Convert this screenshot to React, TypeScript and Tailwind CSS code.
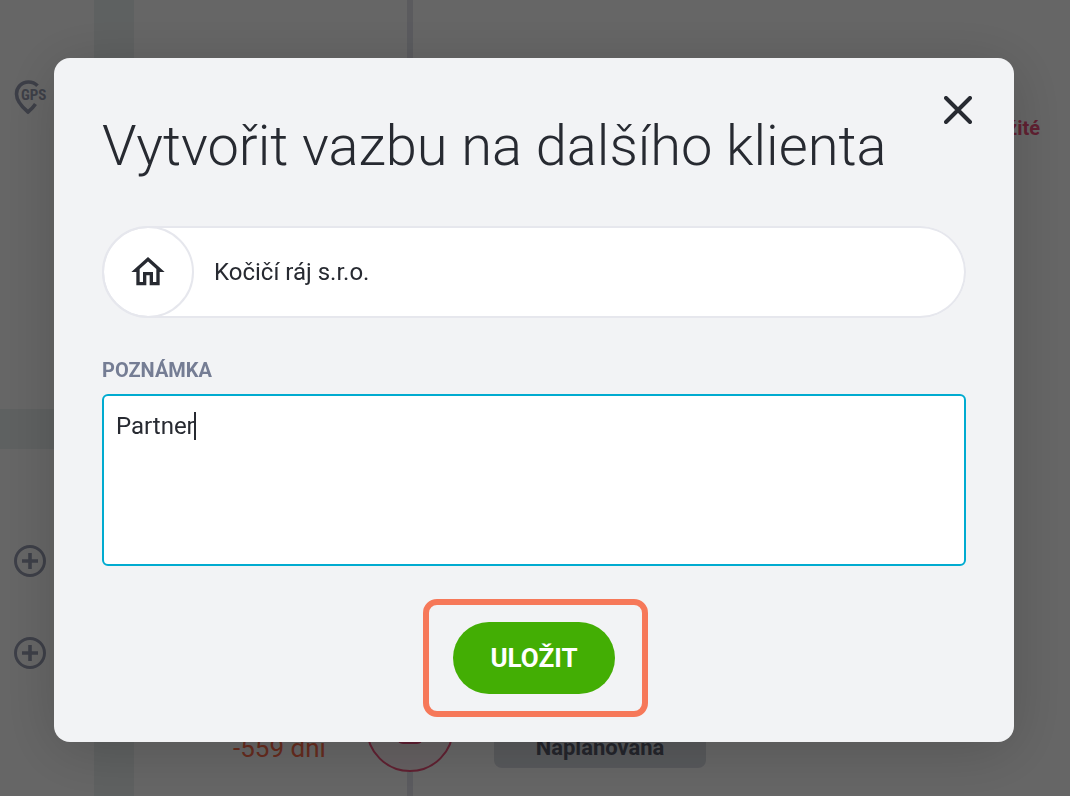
import React, { useState } from 'react'
import { MdOutlineHome } from 'react-icons/md'

const GpsIcon: React.FC = () => (
  <svg width="34" height="36" viewBox="0 0 34 36" fill="none">
    <path
      d="M23.5 5.8 C21 3.2 18 2 14.5 2 C7.5 2 2.5 7.5 2.5 14 C2.5 21.5 8 27 14 32 C17 29.5 19.500 27 21.500 24"
      stroke="#999eb3"
      strokeWidth="3.600"
    />
    <text
      x="7"
      y="20"
      fontSize="15"
      fontWeight="700"
      fill="#999eb3"
      fontFamily="'Roboto Condensed', 'Liberation Sans Narrow', 'DejaVu Sans Condensed', sans-serif"
    >
      GPS
    </text>
  </svg>
)

const PlusCircle: React.FC = () => (
  <svg width="32" height="32" viewBox="0 0 32 32" fill="none" stroke="#999eb3">
    <circle cx="16" cy="16" r="14.500" strokeWidth="3" />
    <path d="M16 8v16M8 16h16" strokeWidth="3.600" />
  </svg>
)

const CloseIcon: React.FC = () => (
  <svg width="28" height="28" viewBox="0 0 28 28" fill="none" stroke="#272a31" strokeWidth="4" strokeLinecap="round">
    <path d="M2 2l24 24M26 2l-24 24" />
  </svg>
)

const ClientPage: React.FC = () => (
  <div className="flex h-screen gap-10 overflow-hidden bg-[#ecf2f2]">
    <aside className="flex w-[94px] shrink-0 flex-col gap-10">
      <div className="h-[409px] shrink-0 bg-white pt-20 pl-[14px]">
        <GpsIcon />
      </div>
      <div className="flex grow flex-col gap-15 bg-white pt-24 pl-[14px]">
        <PlusCircle />
        <PlusCircle />
      </div>
    </aside>

    <main className="flex grow bg-white">
      {/* Dates */}
      <div className="flex w-[232px] shrink-0 flex-col justify-end pr-10 pb-8 text-right">
        <span className="text-[26px] leading-8 text-[#ff6d4c]">-559 dní</span>
      </div>

      {/* Timeline */}
      <div className="flex w-[88px] shrink-0 flex-col items-center">
        <div className="w-[6px] grow bg-[#e3e4ec]" />
        <div className="flex size-[88px] shrink-0 items-center justify-center rounded-full border-2 border-[#f0527c] bg-[#fdf0f3]">
          <div className="h-8 w-[26px] rounded-md bg-[#e8487a]" />
        </div>
        <div className="h-6 w-[6px] shrink-0 bg-[#e3e4ec]" />
      </div>

      {/* Events */}
      <div className="flex grow flex-col justify-between pt-28 pb-7 pl-10">
        <div className="pr-[30px] text-right text-xl leading-8 font-bold text-[#f0527c]">Důležité</div>
        <div className="flex h-16 w-[212px] items-end justify-center rounded-lg bg-[#dbdee4] pb-1 text-[22px] leading-8 font-bold text-[#5a5d6e]">
          Naplánovaná
        </div>
      </div>
    </main>
  </div>
)

const LinkClientDialog: React.FC = () => {
  const [note, setNote] = useState('Partner')

  return (
    <div className="fixed inset-0 overflow-auto bg-black/60 pt-[58px] pr-14 pb-12 pl-[54px]">
      <form
        role="dialog"
        aria-labelledby="dialog-title"
        onSubmit={(e) => e.preventDefault()}
        className="relative mx-auto max-w-[960px] rounded-2xl bg-[#f2f3f5] px-12 pt-14 pb-12 shadow-[0_8px_60px_rgba(0,0,0,0.18)]"
      >
        <button type="button" aria-label="Zavřít" className="absolute top-[38px] right-[42px]">
          <CloseIcon />
        </button>

        <h1 id="dialog-title" className="text-[56px] leading-16 font-light">
          Vytvořit vazbu na dalšího klienta
        </h1>

        {/* Client */}
        <div className="mt-12 flex h-[92px] rounded-full bg-white inset-ring-2 inset-ring-[#e6e7ed]">
          <div className="flex size-[92px] shrink-0 items-center justify-center rounded-full border-2 border-[#e6e7ed]">
            <MdOutlineHome size={40} />
          </div>
          <input
            aria-label="Klient"
            defaultValue="Kočičí ráj s.r.o."
            className="min-w-0 grow bg-transparent px-5 text-2xl outline-none"
          />
        </div>

        {/* Note */}
        <label htmlFor="note" className="mt-10 block text-xl leading-6 font-bold text-[#757d94] uppercase">
          Poznámka
        </label>
        <div className="relative mt-3">
          <textarea
            id="note"
            value={note}
            onChange={(e) => setNote(e.target.value)}
            className="block h-[172px] w-full resize-none rounded-md border-2 border-[#00abd0] bg-white px-3 py-4 text-2xl leading-7 outline-none"
          />
          {/* Caret */}
          <span className="absolute top-[18px] left-[92px] h-7 w-[2px] bg-[#272a31]" />
        </div>

        <div className="mt-14 flex justify-center">
          <div className="relative">
            <button type="submit" className="h-[72px] w-[162px] rounded-full bg-[#43ae04] text-[26px] font-bold text-white">
              ULOŽIT
            </button>
            <span className="pointer-events-none absolute -inset-y-[23px] -right-[33px] -left-[30px] rounded-[14px] border-6 border-[#f67859]" />
          </div>
        </div>
      </form>
    </div>
  )
}

export default function App() {
  return (
    <div className="font-[Roboto,sans-serif] text-[#272a31]">
      <ClientPage />
      <LinkClientDialog />
    </div>
  )
}
